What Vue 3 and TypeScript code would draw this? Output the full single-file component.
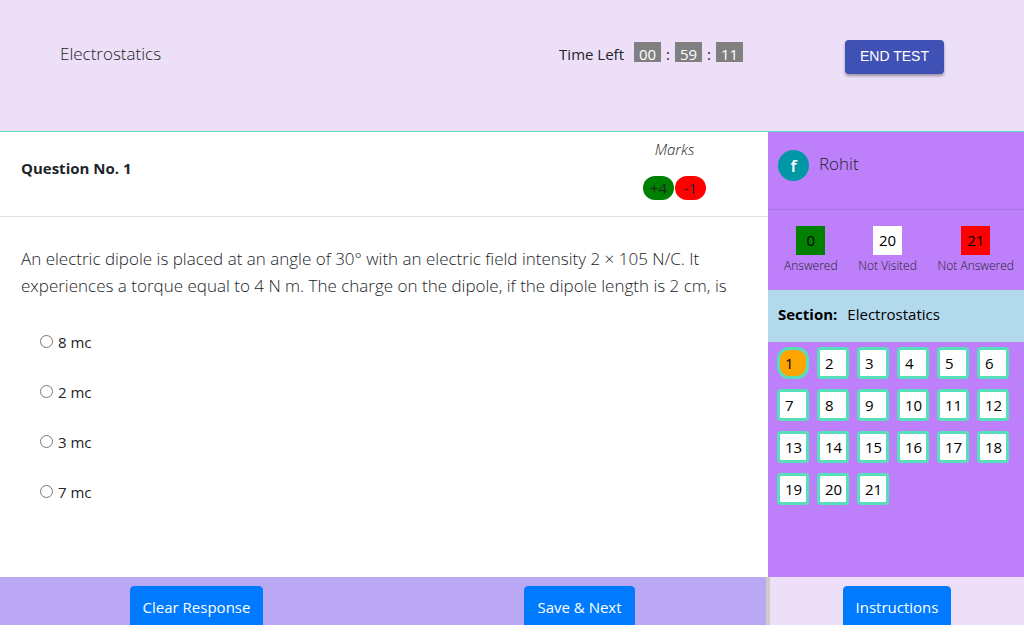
<script setup lang="ts">
import { ref } from 'vue'

interface Stat {
  label: string
  count: number
  tone: string
}

const subject = 'Electrostatics'
const clock: string[] = ['00', '59', '11']
const options: string[] = ['8 mc', '2 mc', '3 mc', '7 mc']
const stats: Stat[] = [
  { label: 'Answered', count: 0, tone: 'answered' },
  { label: 'Not Visited', count: 20, tone: 'unvisited' },
  { label: 'Not Answered', count: 21, tone: 'unanswered' },
]
const current = ref(1)
const picked = ref('')
</script>

<template>
  <div class="exam">
    <header class="top">
      <h1 class="subject">{{ subject }}</h1>
      <div class="timer">
        <span class="timer-label">Time Left</span>
        <template v-for="(part, i) in clock" :key="i">
          <span v-if="i > 0" class="colon">:</span>
          <span class="digits">{{ part }}</span>
        </template>
      </div>
      <button type="button" class="end">END TEST</button>
    </header>

    <div class="middle">
      <main class="question">
        <div class="question-head">
          <h2 class="number">Question No. {{ current }}</h2>
          <div class="marks">
            <em class="marks-label">Marks</em>
            <div class="pills">
              <span class="pill plus">+4</span>
              <span class="pill minus">-1</span>
            </div>
          </div>
        </div>
        <p class="statement">
          An electric dipole is placed at an angle of 30° with an electric field intensity 2 × 105 N/C. It
          experiences a torque equal to 4 N m. The charge on the dipole, if the dipole length is 2 cm, is
        </p>
        <div class="options">
          <label v-for="option in options" :key="option" class="option">
            <input v-model="picked" type="radio" name="answer" :value="option" />
            <span>{{ option }}</span>
          </label>
        </div>
      </main>

      <aside class="side">
        <div class="profile">
          <span class="avatar">f</span>
          <span class="user">Rohit</span>
        </div>
        <div class="stats">
          <div v-for="stat in stats" :key="stat.label" class="stat">
            <span class="count" :class="stat.tone">{{ stat.count }}</span>
            <span class="stat-label">{{ stat.label }}</span>
          </div>
        </div>
        <div class="section">
          <strong>Section:</strong>
          <span>{{ subject }}</span>
        </div>
        <nav class="palette">
          <button
            v-for="n in 21"
            :key="n"
            type="button"
            class="tile"
            :class="{ active: n === current }"
            @click="current = n"
          >
            {{ n }}
          </button>
        </nav>
      </aside>
    </div>

    <footer class="bottom">
      <div class="actions">
        <div class="cell"><button type="button" class="primary">Clear Response</button></div>
        <div class="cell"><button type="button" class="primary">Save &amp; Next</button></div>
      </div>
      <div class="help"><button type="button" class="primary">Instructions</button></div>
    </footer>
  </div>
</template>

<style>
body {
  margin: 0;
  background: #fff;
}
</style>

<style scoped>
.exam,
.exam * {
  box-sizing: border-box;
}

.exam {
  display: flex;
  flex-direction: column;
  min-height: calc(100vh - 12px);
  font-family: 'Segoe UI', 'Open Sans', 'Noto Sans', sans-serif;
  font-size: 15px;
  line-height: 24px;
  color: #212529;
}

button {
  font-family: inherit;
  cursor: pointer;
}

.top {
  display: flex;
  align-items: flex-start;
  height: 132px;
  padding: 40px 80px 0 60px;
  background: #ecdff7;
  border-bottom: 1px solid #57dfb9;
}

.subject {
  flex: 1;
  margin: 0;
  font-size: 17px;
  font-weight: 300;
  line-height: 28px;
}

.timer {
  display: flex;
  align-items: flex-start;
  padding-top: 2px;
  margin-right: 102px;
}

.timer-label {
  margin-right: 10px;
}

.digits {
  width: 27px;
  height: 20px;
  background: #808080;
  color: #fff;
  text-align: center;
}

.colon {
  width: 14px;
  text-align: center;
}

.end {
  width: 99px;
  height: 34px;
  padding: 0 0 2px;
  border: 0;
  border-radius: 4px;
  background: #3f51b5;
  box-shadow: 0 2px 3px rgba(0, 0, 0, 0.35);
  color: #fff;
  font-family: 'Liberation Sans', Arial, sans-serif;
  font-size: 14px;
  font-weight: 500;
}

.middle {
  display: flex;
  flex: 1;
}

.question {
  flex: 3;
  min-width: 0;
}

.question-head {
  display: flex;
  height: 85px;
  padding-left: 21px;
  border-bottom: 1px solid #e1e1e1;
}

.number {
  flex: 1;
  margin: 0;
  padding-top: 24px;
  font-size: 15px;
  font-weight: 700;
  line-height: 24px;
}

.marks {
  display: flex;
  flex-direction: column;
  align-items: center;
  gap: 15px;
  width: 187px;
  padding-top: 5px;
}

.marks-label {
  font-weight: 300;
}

.pills {
  display: flex;
  gap: 1px;
}

.pill {
  width: 31px;
  height: 24px;
  border-radius: 12px;
  text-align: center;
}

.plus {
  background: #008000;
}

.minus {
  background: #f00;
}

.statement {
  margin: 0;
  padding: 28px 40px 0 21px;
  font-size: 17px;
  font-weight: 300;
  line-height: 27px;
}

.options {
  display: flex;
  flex-direction: column;
  align-items: flex-start;
  gap: 26px;
  padding: 31px 0 0 40px;
}

.option {
  display: flex;
  align-items: center;
  gap: 5px;
}

.option input {
  width: 13px;
  height: 13px;
  margin: 0 0 1px;
}

.side {
  flex: 1;
  min-width: 0;
  background: #bd80fa;
}

.profile {
  display: flex;
  gap: 10px;
  height: 78px;
  padding: 18px 10px 0;
  border-bottom: 1px solid #aa73e1;
}

.avatar {
  width: 31px;
  height: 31px;
  border-radius: 50%;
  background: #0097a7;
  color: #fff;
  font-size: 17px;
  font-weight: 600;
  line-height: 31px;
  text-align: center;
}

.user {
  font-size: 17px;
  font-weight: 300;
  line-height: 28px;
}

.stats {
  display: flex;
  justify-content: space-between;
  height: 80px;
  padding: 16px 10px 0 16px;
}

.stat {
  display: flex;
  flex-direction: column;
  align-items: center;
}

.count {
  width: 29px;
  height: 29px;
  color: #000;
  line-height: 29px;
  text-align: center;
}

.answered {
  background: #008000;
}

.unvisited {
  background: #fff;
}

.unanswered {
  background: #f00;
}

.stat-label {
  font-size: 12px;
  font-weight: 300;
  line-height: 22px;
}

.section {
  display: flex;
  gap: 10px;
  height: 52px;
  padding: 12px 10px 0;
  background: #b3d9ec;
  color: #000;
}

.palette {
  display: flex;
  flex-wrap: wrap;
  gap: 10px 8px;
  padding: 5px 9px 0;
}

.tile {
  width: 32px;
  height: 32px;
  padding: 0 0 0 5px;
  border: 3px solid #57dfb9;
  border-radius: 4px;
  background: #fff;
  color: #000;
  font-size: 15px;
  line-height: 24px;
  text-align: left;
}

.tile.active {
  border-radius: 12px;
  background: #ffa500;
}

.bottom {
  display: flex;
  height: 48px;
  overflow: hidden;
}

.actions {
  display: flex;
  flex: 1;
  background: #baa8f5;
}

.cell {
  display: flex;
  flex: 1;
  justify-content: center;
  padding: 9px 0 0 10px;
}

.help {
  display: flex;
  justify-content: center;
  width: 258px;
  padding-top: 9px;
  border-left: 4px solid #ccc;
  background: #ecdff7;
}

.primary {
  height: 44px;
  padding: 0 12px 2px;
  border: 1px solid #007bff;
  border-radius: 4px;
  background: #007bff;
  color: #fff;
  font-size: 15px;
  line-height: 24px;
}
</style>
